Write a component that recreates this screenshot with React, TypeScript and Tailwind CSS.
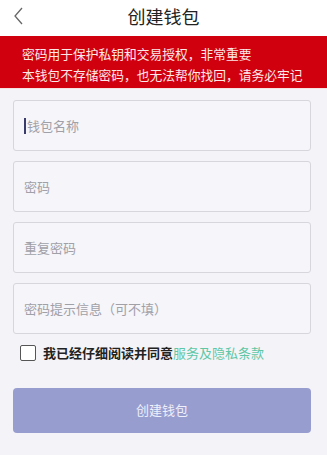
export default function App() {
  const fields = ["钱包名称", "密码", "重复密码", "密码提示信息（可不填）"];

  return (
    <div
      className="w-[327px] h-[455px] bg-[#f4f4f8] overflow-hidden"
      style={{ fontFamily: '"Noto Sans CJK SC", "Noto Sans", sans-serif' }}
    >
      {/* Header */}
      <div className="relative h-[36px] bg-white flex items-center justify-center">
        <svg
          className="absolute left-[12px] top-[6px]"
          width="14"
          height="20"
          viewBox="0 0 14 20"
          fill="none"
          stroke="#666"
          strokeWidth="1.3"
        >
          <path d="M10 2 L3 10 L10 18" />
        </svg>
        <span className="text-[18px] text-[#222] leading-none -mt-[5px]">创建钱包</span>
      </div>

      {/* Warning banner */}
      <div className="bg-[#d0000f] h-[53px] px-[22px] pt-[7px] text-[12.75px] leading-[21px] text-[#fde8e8] whitespace-nowrap border-b border-[#f7e0e0]">
        <p>密码用于保护私钥和交易授权，非常重要</p>
        <p>本钱包不存储密码，也无法帮你找回，请务必牢记</p>
      </div>

      {/* Form */}
      <div className="px-[13px] pt-[11px] flex flex-col gap-[10px] w-[324px]">
        {fields.map((f, i) => (
          <div
            key={f}
            className="h-[51px] border border-[#d6d6dc] rounded-[3px] bg-[#f5f5fa] flex items-center pl-[10px]"
          >
            {i === 0 && <span className="w-[2px] h-[16px] bg-[#3b3b6b] mr-[1px]" />}
            <span className="text-[13px] text-[#a0a0a8]">{f}</span>
          </div>
        ))}
      </div>

      <div className="flex items-center px-[20px] mt-[9px]">
        <span className="w-[16px] h-[16px] border-[1.5px] border-[#555] rounded-[2px] bg-white" />
        <span className="ml-[7px] text-[13px] font-semibold text-[#222]">
          我已经仔细阅读并同意<span className="text-[#5fc7a6] font-normal">服务及隐私条款</span>
        </span>
      </div>

      <div className="px-[13px] mt-[25px] w-[324px]">
        <div className="h-[45px] rounded-[4px] bg-[#989dcf] flex items-center justify-center text-[13px] text-[#eef0fb]">
          创建钱包
        </div>
      </div>
    </div>
  );
}
